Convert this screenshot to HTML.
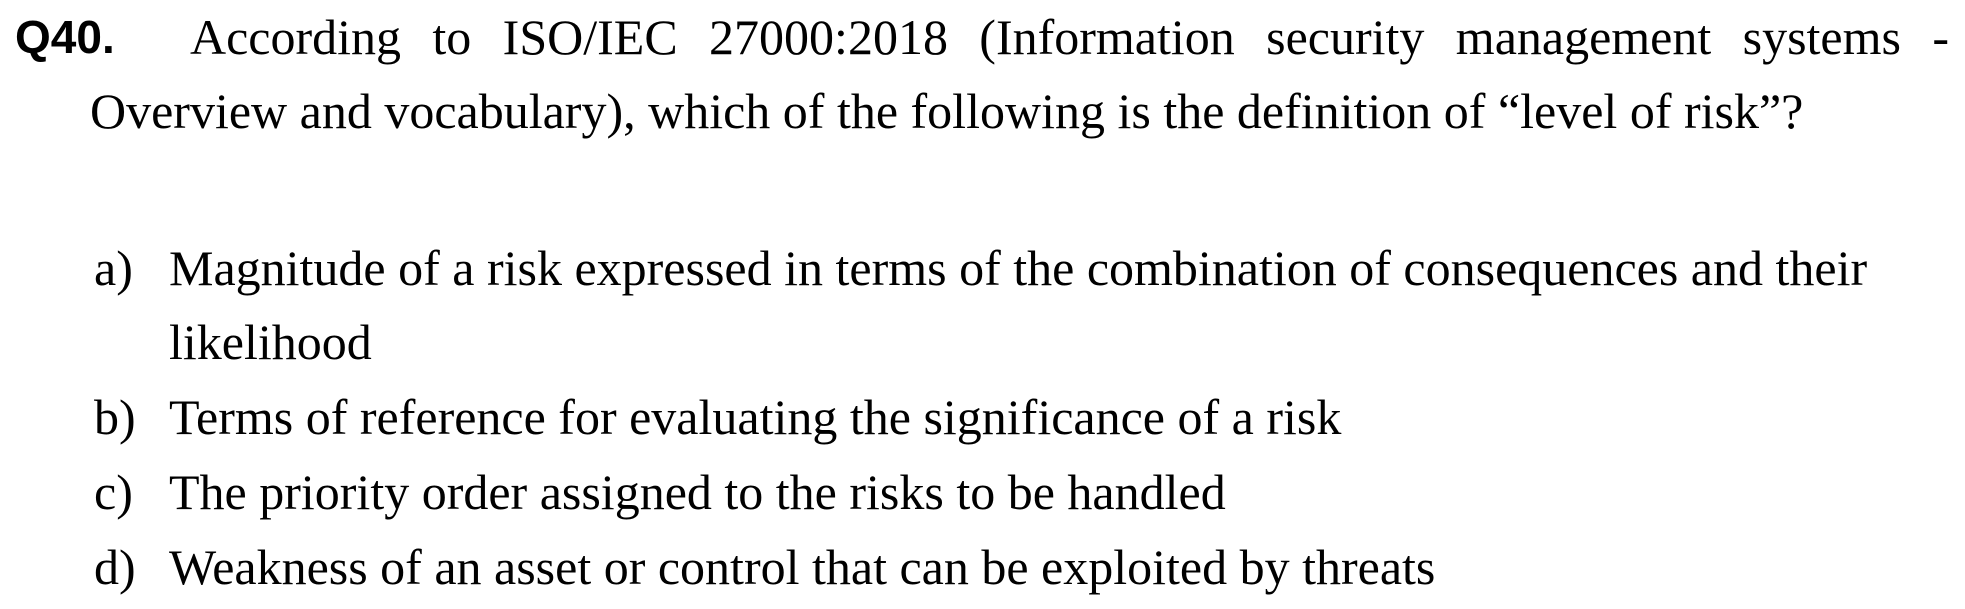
<!DOCTYPE html>
<html><head><meta charset="utf-8"><style>
html,body{margin:0;padding:0;background:#fff;width:1965px;height:609px;overflow:hidden;position:relative}
.t{position:absolute;font-family:"Liberation Serif",serif;font-size:50px;line-height:50px;color:#000;white-space:nowrap}
.q{position:absolute;left:15px;top:12px;font-family:"Liberation Sans",sans-serif;font-weight:bold;font-size:46px;line-height:50px}
.l1{left:190px;width:1759px;text-align:justify;text-align-last:justify;white-space:normal}
</style></head><body>
<div class="q">Q40.</div>
<div class="t l1" style="top:12px">According to ISO/IEC 27000:2018 (Information security management systems -</div>
<div class="t" style="left:90px;top:86px">Overview and vocabulary), which of the following is the definition of “level of risk”?</div>
<div class="t" style="left:94px;top:243px">a)</div>
<div class="t" style="left:169px;top:243px">Magnitude of a risk expressed in terms of the combination of consequences and their</div>
<div class="t" style="left:169px;top:317px">likelihood</div>
<div class="t" style="left:94px;top:392px">b)</div>
<div class="t" style="left:169px;top:392px">Terms of reference for evaluating the significance of a risk</div>
<div class="t" style="left:94px;top:467px">c)</div>
<div class="t" style="left:169px;top:467px">The priority order assigned to the risks to be handled</div>
<div class="t" style="left:94px;top:542px">d)</div>
<div class="t" style="left:169px;top:542px">Weakness of an asset or control that can be exploited by threats</div>
</body></html>
